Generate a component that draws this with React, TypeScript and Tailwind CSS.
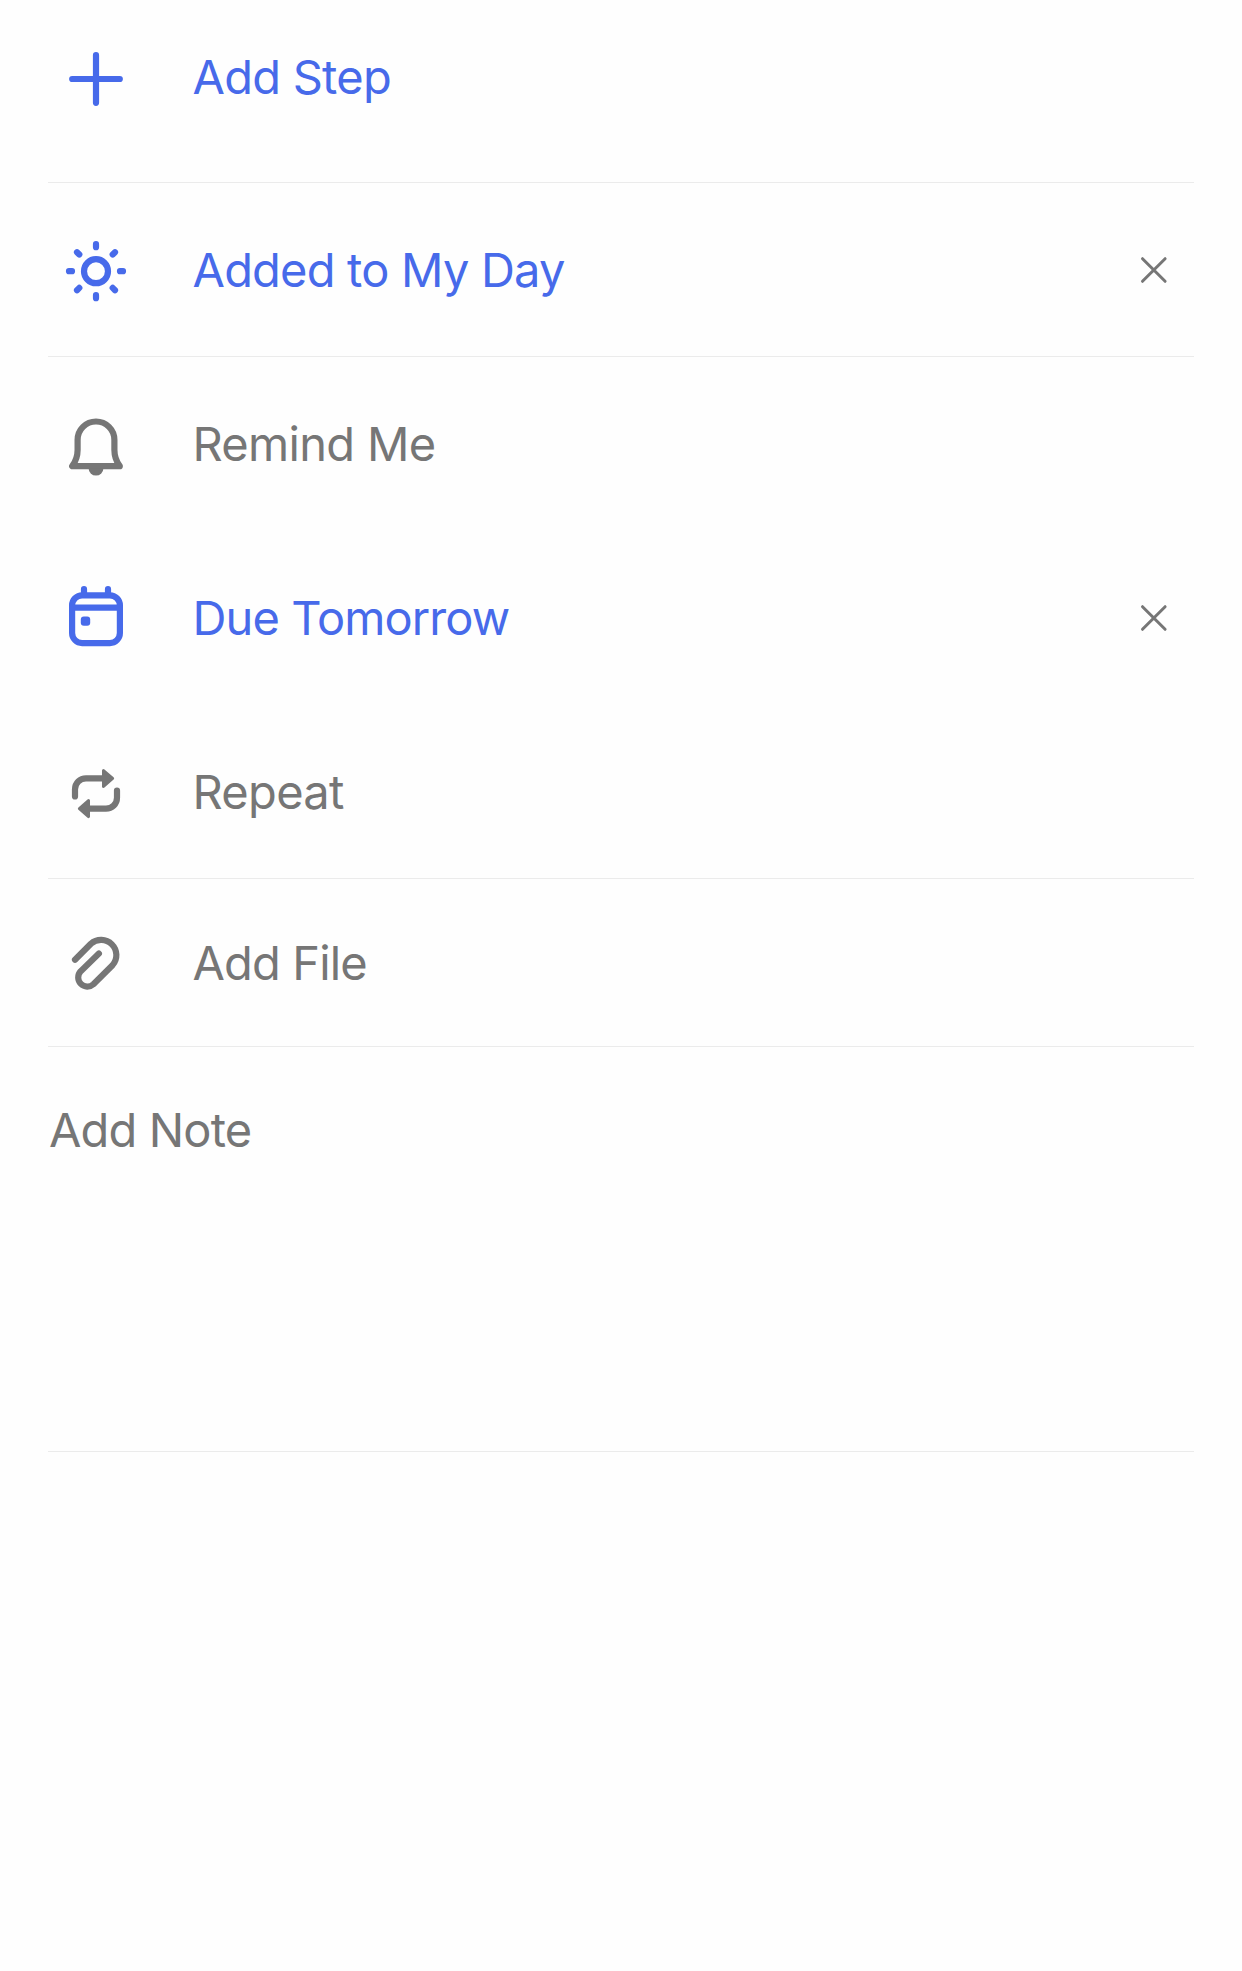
import type { ReactNode } from "react";

function Icon({ children }: { children: ReactNode }) {
  return (
    <svg
      viewBox="0 0 72 72"
      className="ml-3 size-[72px] shrink-0"
      fill="none"
      stroke="currentColor"
      strokeWidth={6.2}
      strokeLinecap="round"
      strokeLinejoin="round"
      aria-hidden="true"
    >
      {children}
    </svg>
  );
}

const PlusIcon = () => (
  <Icon>
    <path d="M36 14.2v47.6M12.2 38h47.6" />
  </Icon>
);

const SunIcon = () => (
  <Icon>
    <circle cx="36" cy="37.2" r="12" />
    <path d="M36 13.2v-3M36 64.2v-3M12 37.2H9M63 37.2h-3M19.3 20.5l-2.3-2.3M52.7 20.5l2.3-2.3M19.3 53.9l-2.3 2.3M52.7 53.9l2.3 2.3" />
  </Icon>
);

const BellIcon = () => (
  <Icon>
    <path d="M36 13.5A18.4 18.4 0 0 0 17.6 31.9V42C17.6 48 16 53 12.2 58.2H59.8C56 53 54.4 48 54.4 42V31.9A18.4 18.4 0 0 0 36 13.5Z" />
    <path d="M28.6 60.2a7.4 7.4 0 0 0 14.8 0Z" fill="currentColor" stroke="none" />
  </Icon>
);

const CalendarIcon = () => (
  <Icon>
    <rect x="12.1" y="13.3" width="47.8" height="47.8" rx="10" />
    <path d="M12 25.6h48" strokeLinecap="butt" />
    <path d="M24 7.2v5M48 7.2v5" />
    <rect x="20.8" y="34.4" width="9.4" height="9.4" rx="3" fill="currentColor" stroke="none" />
  </Icon>
);

const RepeatIcon = () => (
  <Icon>
    <path d="M15 40.5V33.3a11 11 0 0 1 11-11H43M57 34.5V41.7a11 11 0 0 1-11 11H29" />
    <path
      d="M43.5 14.6L52.6 22.4L43.5 30.4ZM28.5 44.6L19.4 52.7L28.5 60.6Z"
      fill="currentColor"
      strokeWidth={3}
    />
  </Icon>
);

const ClipIcon = () => (
  <Icon>
    <path d="M15 32.8L30.9 16.7A15.3 15.3 0 0 1 52.5 38.3L33.4 57.2A9.1 9.1 0 0 1 20.5 44.4L38.9 26.6" />
  </Icon>
);

interface RowProps {
  icon: ReactNode;
  label: string;
  className: string;
  labelClass?: string;
  dismissible?: boolean;
}

function Row({ icon, label, className, labelClass = "", dismissible }: RowProps) {
  return (
    <div className={`flex items-center border-[#ebebeb] ${className}`}>
      {icon}
      <span className={`ml-[60.5px] whitespace-nowrap ${labelClass}`}>{label}</span>
      {dismissible && (
        <button aria-label={`Remove ${label}`} className="mr-[24.5px] ml-auto text-[#767676]">
          <svg
            viewBox="0 0 32 32"
            className="size-8"
            fill="none"
            stroke="currentColor"
            strokeWidth={3}
            strokeLinecap="round"
          >
            <path d="M4.5 4.7l22.6 22.6M27.1 4.7L4.5 27.3" />
          </svg>
        </button>
      )}
    </div>
  );
}

export default function App() {
  return (
    <main className="flex min-h-screen flex-col bg-[#fefefe] px-12 font-['Inter',sans-serif] text-[47px] leading-[56px] tracking-[-0.85px] text-[#767676]">
      <Row icon={<PlusIcon />} label="Add Step" className="h-[183px] border-b pb-[29px] text-[#476aea]" labelClass="tracking-[-0.75px]" />
      <Row icon={<SunIcon />} label="Added to My Day" className="h-[174px] border-b text-[#476aea]" labelClass="tracking-[-0.8px]" dismissible />
      <Row icon={<BellIcon />} label="Remind Me" className="h-[174px]" labelClass="tracking-[-0.7px]" />
      <Row icon={<CalendarIcon />} label="Due Tomorrow" className="h-[174px] text-[#476aea]" labelClass="tracking-[-0.9px]" dismissible />
      <Row icon={<RepeatIcon />} label="Repeat" className="h-[174px] border-b" labelClass="tracking-[-0.7px]" />
      <Row icon={<ClipIcon />} label="Add File" className="h-[168px] border-b" />
      <div className="h-[405px] border-b border-[#ebebeb] pt-[55px] pl-px">Add Note</div>
    </main>
  );
}
